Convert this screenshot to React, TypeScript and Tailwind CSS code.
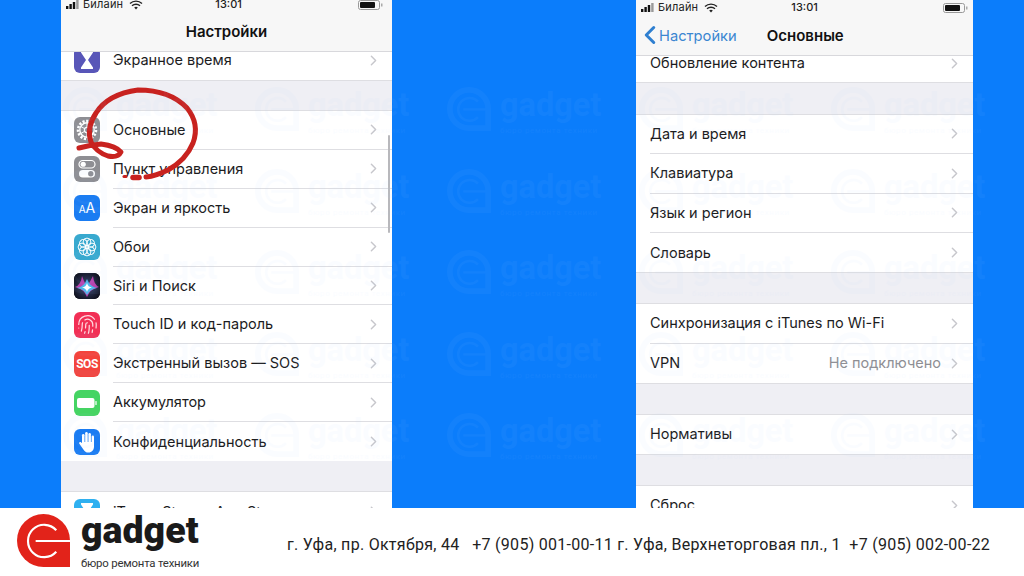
import { ChevronLeft, ChevronRight, Fingerprint } from 'lucide-react';
import type { ReactNode } from 'react';

const ui = 'font-["Inter",sans-serif]';

function GadgetMark({ size, color, line }: { size: number; color: string; line: string }) {
  return (
    <svg width={size} height={size} viewBox="0 0 54 54" className="shrink-0">
      <path d="M27 0A27 27 0 0 1 54 27V54H27A27 27 0 0 1 27 0Z" fill={color} />
      <path d="M40 16.5A16.5 16.5 0 1 0 40 38.5" fill="none" stroke={line} strokeWidth="2.2" />
      <path d="M19 27.5H54" stroke={line} strokeWidth="2.2" />
    </svg>
  );
}

function StatusBar({ className, timeClass }: { className: string; timeClass: string }) {
  return (
    <div className={`flex items-center bg-[#f7f7f7] text-[11px] text-[#222] ${className}`}>
      <svg width="15" height="9" viewBox="0 0 15 9" className="shrink-0">
        <rect x="0" y="6" width="2.4" height="3" fill="#111" />
        <rect x="3.4" y="4" width="2.4" height="5" fill="#111" />
        <rect x="6.8" y="2" width="2.4" height="7" fill="#111" />
        <rect x="10.2" y="0" width="2.4" height="9" fill="#999" />
      </svg>
      <span className="ml-[2px] leading-[15px] tracking-[0.2px]">Билайн</span>
      <svg width="14" height="10" viewBox="0 0 14 10" className="ml-[6px] shrink-0">
        <path d="M1 3.6a8.6 8.6 0 0 1 12 0M3 5.8a5.8 5.8 0 0 1 8 0" fill="none" stroke="#222" strokeWidth="1.4" />
        <path d="M5.2 7.6a2.6 2.6 0 0 1 3.6 0L7 9.6Z" fill="#222" />
      </svg>
      <span className={`font-medium leading-[15px] ${timeClass}`}>13:01</span>
      <svg width="25" height="10" viewBox="0 0 25 10" className="ml-auto shrink-0">
        <rect x="0.5" y="0.5" width="21" height="9" rx="2" fill="none" stroke="#999" />
        <rect x="2" y="2" width="15" height="6" rx="1" fill="#111" />
        <rect x="23" y="3.5" width="1.5" height="3" fill="#aaa" />
      </svg>
    </div>
  );
}

function Row({
  label,
  icon,
  value,
  height,
  inset,
  last,
}: {
  label: string;
  icon?: ReactNode;
  value?: string;
  height: string;
  inset: string;
  last?: boolean;
}) {
  return (
    <div className={`flex shrink-0 items-stretch bg-white ${height}`}>
      {icon && <div className="flex w-[52px] shrink-0 items-center pl-[13px]">{icon}</div>}
      <div className={`flex min-w-0 flex-1 items-center pr-[10px] ${inset} ${last ? '' : 'border-b border-[#dedee2]'}`}>
        <span className="whitespace-nowrap text-[14.5px] leading-[18px] text-[#1c1c1e]">{label}</span>
        {value && <span className="ml-auto whitespace-nowrap text-[14.5px] leading-[18px] text-[#8e8e93]">{value}</span>}
        <ChevronRight size={17} strokeWidth={2} className={`shrink-0 text-[#c7c7cc] ${value ? 'ml-[5px]' : 'ml-auto'}`} />
      </div>
    </div>
  );
}

function Tile({ bg, children }: { bg: string; children?: ReactNode }) {
  return <div className={`flex h-[26px] w-[26px] shrink-0 items-center justify-center overflow-hidden rounded-[6px] ${bg}`}>{children}</div>;
}

const Gear = (
  <svg width="22" height="22" viewBox="0 0 22 22" fill="none" stroke="#fff">
    <circle cx="11" cy="11" r="9" strokeWidth="2.6" strokeDasharray="2.2 1.55" />
    <circle cx="11" cy="11" r="7.2" strokeWidth="1.4" />
    <circle cx="11" cy="11" r="2.6" strokeWidth="1.2" />
    <path d="M11 4v4.4M11 13.6V18M4.9 7.5l3.8 2.2M13.3 12.3l3.8 2.2M4.9 14.5l3.8-2.2M13.3 9.7l3.8-2.2" strokeWidth="1" />
  </svg>
);

const Flower = (
  <svg width="22" height="22" viewBox="0 0 22 22" fill="none" stroke="#fff" strokeWidth="1">
    {[0, 45, 90, 135, 180, 225, 270, 315].map((a) => (
      <circle key={a} cx="11" cy="6" r="3.9" transform={`rotate(${a} 11 11)`} />
    ))}
  </svg>
);

const Toggles = (
  <svg width="18" height="20" viewBox="0 0 18 20">
    <rect x="1" y="1.5" width="16" height="7.5" rx="3.75" fill="none" stroke="#fff" strokeWidth="1.2" />
    <circle cx="5.2" cy="5.25" r="2.6" fill="#fff" />
    <rect x="1" y="11" width="16" height="7.5" rx="3.75" fill="#fff" />
    <circle cx="12.8" cy="14.75" r="2.7" fill="#8e8e93" />
  </svg>
);

const Hourglass = (
  <svg width="14" height="20" viewBox="0 0 14 20" fill="#fff">
    <path d="M1 1h12v1.6L8 10l5 7.4V19H1v-1.6L6 10 1 2.6Z" />
  </svg>
);

const Siri = (
  <svg width="26" height="26" viewBox="0 0 26 26">
    <defs>
      <radialGradient id="siriBg" cx="50%" cy="50%" r="60%">
        <stop offset="0%" stopColor="#3c4a78" />
        <stop offset="100%" stopColor="#10121f" />
      </radialGradient>
    </defs>
    <rect width="26" height="26" fill="url(#siriBg)" />
    <path d="M1 14Q7 12 8 3Q11 11 13 13Q16 9 19 3Q20 12 25 14Q16 16 13 24Q10 16 1 14Z" fill="#d048c0" opacity="0.85" />
    <path d="M3 15Q10 14 13 6Q16 14 23 15Q16 16 13 22Q10 16 3 15Z" fill="#4fb8ea" />
    <path d="M8 14.5Q12 14 13 10Q14 14 18 14.5Q14 15 13 19Q12 15 8 14.5Z" fill="#fff" />
  </svg>
);

const BatteryIcon = (
  <svg width="20" height="10" viewBox="0 0 20 10">
    <rect x="0" y="0" width="17.5" height="10" rx="2" fill="#fff" />
    <rect x="18.2" y="3" width="1.6" height="4" rx="0.6" fill="#d5f5dc" />
  </svg>
);

const HandIcon = (
  <svg width="20" height="22" viewBox="0 0 20 22" fill="#fff">
    <rect x="5" y="3" width="2.5" height="11" rx="1.25" />
    <rect x="8.2" y="1" width="2.5" height="12" rx="1.25" />
    <rect x="11.4" y="2" width="2.5" height="12" rx="1.25" />
    <rect x="14.6" y="4.5" width="2.4" height="10" rx="1.2" />
    <path d="M5 11H17V15.5C17 19 14.8 21.5 11.5 21.5C9 21.5 7.6 20.4 6.4 18.4L2.2 12.6C1.5 11.5 3 10.3 4 11.2L5 12.2Z" />
  </svg>
);

function WatermarkLayer() {
  const cols = [0, 1, 2, 3, 4];
  const rows = [0, 1, 2, 3, 4];
  return (
    <div className="pointer-events-none absolute left-[63px] top-[87px] grid grid-cols-[repeat(5,192px)] grid-rows-[repeat(5,81.5px)]">
      {rows.flatMap((r) =>
        cols.map((c) => (
          <div key={`${r}-${c}`} className="flex h-[50px] items-start opacity-[0.05]">
            <svg width="44" height="44" viewBox="0 0 54 54" fill="none" stroke="#a8d0ff" className="shrink-0">
              <path d="M27 3.5A23.5 23.5 0 0 1 50.5 27V50.5H27A23.5 23.5 0 0 1 27 3.5Z" strokeWidth="7" />
              <path d="M38 18A14 14 0 1 0 38 37" strokeWidth="3" />
              <path d="M20 27.5H50" strokeWidth="3" />
            </svg>
            <div className="ml-[9px] flex flex-col font-['Roboto',sans-serif] text-[#a8d0ff]">
              <span className="text-[32.5px] font-bold leading-[36px]">gadget</span>
              <span className="mt-[3px] text-[8px] leading-[9px] tracking-[0.6px]">бюро ремонта техники</span>
            </div>
          </div>
        )),
      )}
    </div>
  );
}

export default function App() {
  return (
    <div className={`flex h-[576px] w-[1024px] flex-col overflow-hidden bg-white ${ui}`}>
      {/* Two phone screens on blue */}
      <div className="relative flex h-[508px] shrink-0 items-start overflow-hidden bg-[#0b7dfb]">
        {/* Left phone: settings list */}
        <div className="relative ml-[61px] flex h-[508px] w-[331px] flex-col overflow-hidden bg-[#efeff4]">
          <StatusBar className="relative z-10 -mt-[3px] h-[15px] shrink-0 pl-[5px] pr-[9px]" timeClass="ml-[72px]" />
          <div className="relative z-10 flex h-[40px] shrink-0 items-center justify-center border-b border-[#d8d8dc] bg-[#f7f7f7] text-[15px] font-semibold leading-[20px] text-[#111]">
            Настройки
          </div>
          <Row height="h-[28px] pb-[12px]" inset="" last label="Экранное время" icon={<Tile bg="bg-[#5856b8]">{Hourglass}</Tile>} />
          <div className="h-[31px] shrink-0 border-y border-[#dedee2]" />
          <Row height="h-[38.9px]" inset="" label="Основные" icon={<Tile bg="bg-[#8e8e93]">{Gear}</Tile>} />
          <Row height="h-[38.9px]" inset="" label="Пункт управления" icon={<Tile bg="bg-[#8e8e93]">{Toggles}</Tile>} />
          <Row height="h-[38.9px]" inset="" label="Экран и яркость" icon={<Tile bg="bg-[#1a7cf2]"><span className="text-[14px] leading-[16px] text-white"><span className="text-[10px]">A</span>A</span></Tile>} />
          <Row height="h-[38.9px]" inset="" label="Обои" icon={<Tile bg="bg-[#38a9cf]">{Flower}</Tile>} />
          <Row height="h-[38.9px]" inset="" label="Siri и Поиск" icon={<Tile bg="bg-[#10121f]">{Siri}</Tile>} />
          <Row height="h-[38.9px]" inset="" label="Touch ID и код-пароль" icon={<Tile bg="bg-[#f22f55]"><Fingerprint size={21} color="#ffd9e0" strokeWidth={1.4} /></Tile>} />
          <Row height="h-[38.9px]" inset="" label="Экстренный вызов — SOS" icon={<Tile bg="bg-[#f4433c]"><span className="font-['Roboto',sans-serif] text-[12px] font-bold leading-[14px] tracking-[-0.5px] text-white">SOS</span></Tile>} />
          <Row height="h-[38.9px]" inset="" label="Аккумулятор" icon={<Tile bg="bg-[#45d463]">{BatteryIcon}</Tile>} />
          <Row height="h-[38.9px]" inset="" last label="Конфиденциальность" icon={<Tile bg="bg-[#1a7cf2]">{HandIcon}</Tile>} />
          <div className="h-[31px] shrink-0 border-b border-[#dedee2]" />
          <Row height="h-[39px]" inset="" last label="iTunes Store и App Store" icon={<Tile bg="bg-[#2fb0f0]">{Hourglass}</Tile>} />
          <div className="absolute right-[2px] top-[135px] h-[98px] w-[2.5px] rounded-full bg-[#b8b8bc]" />
        </div>

        {/* Red marker circle drawn over the list */}
        <svg className="pointer-events-none absolute left-0 top-0" width="240" height="200" viewBox="0 0 240 200" fill="none" stroke="#c8221f" strokeLinecap="round" strokeLinejoin="round">
          <path d="M79 148Q90 145 101 144Q116 146 121 152Q118 158 108 156Q96 152 91 142Q86 128 96 113Q108 94 138 90Q170 90 187 108Q200 124 193 143Q186 160 168 170Q156 176 146 177" strokeWidth="5" />
          <path d="M133 177.5H139" strokeWidth="5.5" />
          <path d="M124 176.5H126" strokeWidth="3" />
        </svg>

        {/* Right phone: general settings */}
        <div className="ml-[244px] flex h-[508px] w-[337px] flex-col overflow-hidden bg-[#efeff4]">
          <StatusBar className="relative z-10 h-[15px] shrink-0 pl-[5px] pr-[5px]" timeClass="ml-[73px]" />
          <div className="relative z-10 flex h-[41px] shrink-0 items-center border-b border-[#d8d8dc] bg-[#f7f7f7]">
            <ChevronLeft size={30} strokeWidth={2.4} className="-ml-[1px] shrink-0 text-[#2f7fd0]" />
            <span className="-ml-[6px] mt-[2px] text-[14.7px] leading-[20px] text-[#3b86d1]">Настройки</span>
            <span className="ml-[30px] mt-[2px] text-[15px] font-semibold leading-[20px] text-[#111]">Основные</span>
          </div>
          <Row height="h-[26px] pb-[12px]" inset="pl-[14px]" last label="Обновление контента" />
          <div className="h-[32.5px] shrink-0 border-y border-[#dedee2]" />
          <Row height="h-[39.5px]" inset="ml-[14px]" label="Дата и время" />
          <Row height="h-[39.5px]" inset="ml-[14px]" label="Клавиатура" />
          <Row height="h-[39.5px]" inset="ml-[14px]" label="Язык и регион" />
          <Row height="h-[39px]" inset="pl-[14px]" last label="Словарь" />
          <div className="h-[32px] shrink-0 border-y border-[#dedee2]" />
          <Row height="h-[39.5px]" inset="ml-[14px]" label="Синхронизация с iTunes по Wi-Fi" />
          <Row height="h-[39.5px]" inset="pl-[14px]" last label="VPN" value="Не подключено" />
          <div className="h-[31.5px] shrink-0 border-y border-[#dedee2]" />
          <Row height="h-[39.5px]" inset="pl-[14px]" last label="Нормативы" />
          <div className="h-[32px] shrink-0 border-y border-[#dedee2]" />
          <Row height="h-[38px]" inset="pl-[14px]" last label="Сброс" />
        </div>

        <WatermarkLayer />
      </div>

      {/* Footer with logo and addresses */}
      <div className="relative z-10 flex h-[68px] shrink-0 items-start bg-white font-['Roboto',sans-serif]">
        <div className="ml-[17px] mt-[6px]">
          <GadgetMark size={53} color="#e2231a" line="#fff" />
        </div>
        <div className="ml-[11px] flex w-[118px] shrink-0 flex-col">
          <span className="mt-[2px] text-[37.5px] font-black leading-[40px] text-[#1a1a1a]">gadget</span>
          <span className="mt-[7px] whitespace-nowrap text-[11.4px] leading-[13px] tracking-[-0.2px] text-[#333]">бюро ремонта техники</span>
        </div>
        <div className="ml-[88px] mt-[28px] whitespace-pre text-[16px] leading-[18px] tracking-[0.28px] text-[#222]">
          г. Уфа, пр. Октября, 44{'   '}+7 (905) 001-00-11 г. Уфа, Верхнеторговая пл., 1{'  '}+7 (905) 002-00-22
        </div>
      </div>
    </div>
  );
}
